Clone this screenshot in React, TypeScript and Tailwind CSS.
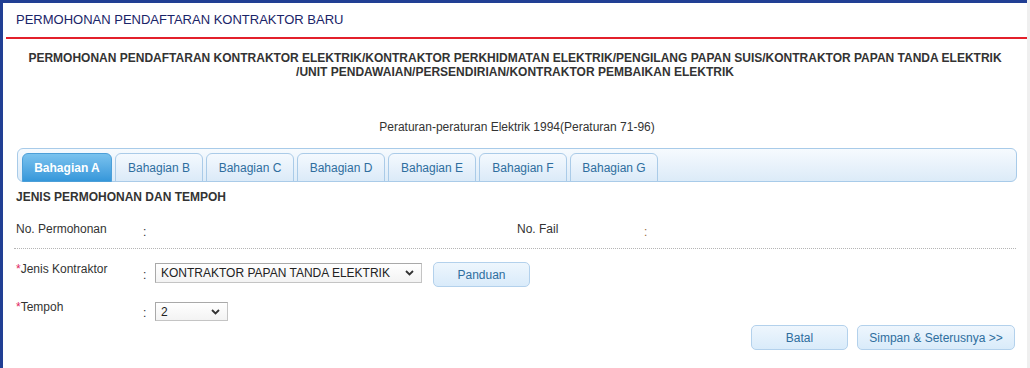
import React from "react";

const tabs = ["Bahagian A", "Bahagian B", "Bahagian C", "Bahagian D", "Bahagian E", "Bahagian F", "Bahagian G"];

function Chevron() {
  return (
    <svg width="9" height="6" viewBox="0 0 9 6" className="shrink-0">
      <path d="M1 1l3.5 3.5L8 1" fill="none" stroke="#333" strokeWidth="1.8" />
    </svg>
  );
}

function FakeSelect({ value, className }: { value: string; className: string }) {
  return (
    <div
      className={
        "flex items-center justify-between pl-[5px] pr-[7px] border border-[#c4c4c4] border-t-[#a9a9a9] border-l-[#a9a9a9] bg-gradient-to-b from-white to-[#f3f3f3] text-[12px] text-[#222] " +
        className
      }
    >
      <span>{value}</span>
      <Chevron />
    </div>
  );
}

function BlueButton({ label, className }: { label: string; className: string }) {
  return (
    <button
      className={
        "h-[25px] rounded-[5px] border border-[#b3d1ec] bg-gradient-to-b from-[#eef6fd] to-[#d9ebfa] text-[12px] text-[#2e6e9e] " +
        className
      }
    >
      {label}
    </button>
  );
}

export default function App() {
  return (
    <div className="w-[1030px] h-[368px] bg-[#efefef] flex font-['Liberation_Sans',Arial,sans-serif] overflow-hidden">
      <div className="w-[1027px] h-full bg-white border-l-[3px] border-t-[3px] border-[#213f94]">
        {/* TITLE */}
        <div className="h-[34px] pl-[13px] flex items-center text-[13px] text-[#1a2468]">
          PERMOHONAN PENDAFTARAN KONTRAKTOR BARU
        </div>
        <div className="ml-[3px] h-[2px] bg-[#e3202b]" />

        <div className="mt-[12px] text-center text-[12px] leading-[14px] font-bold text-[#333] whitespace-nowrap">
          PERMOHONAN PENDAFTARAN KONTRAKTOR ELEKTRIK/KONTRAKTOR PERKHIDMATAN ELEKTRIK/PENGILANG PAPAN SUIS/KONTRAKTOR PAPAN TANDA ELEKTRIK
          <br />
          /UNIT PENDAWAIAN/PERSENDIRIAN/KONTRAKTOR PEMBAIKAN ELEKTRIK
        </div>

        <div className="mt-[41px] text-center text-[12px] leading-[14px] text-[#333] pl-[4px]">
          Peraturan-peraturan Elektrik 1994(Peraturan 71-96)
        </div>

        {/* TABS */}
        <div className="ml-[14px] mt-[14px] w-[1000px] h-[34px] rounded-[6px] border border-[#a8cbe9] bg-gradient-to-b from-[#f6fafe] to-[#dcebf8] pl-[4px] pt-[3px] flex items-end gap-[3px]">
          {tabs.map((t, i) => (
            <div
              key={t}
              className={
                i === 0
                  ? "w-[90px] h-[29px] -mb-px rounded-t-[6px] border border-[#4c9fd8] bg-gradient-to-b from-[#79c2ee] to-[#3597da] text-white font-bold text-[12px] flex items-center justify-center"
                  : "w-[88px] h-[29px] -mb-px rounded-t-[6px] border border-[#aacbe8] bg-gradient-to-b from-[#f4f9fe] to-[#dbeaf8] text-[#2e6e9e] text-[12px] flex items-center justify-center"
              }
            >
              {t}
            </div>
          ))}
        </div>

        <div className="pl-[13px] pr-[11px]">
          <div className="mt-[8px] text-[12px] leading-[14px] font-bold text-[#333]">JENIS PERMOHONAN DAN TEMPOH</div>

          <div className="mt-[16px] grid grid-cols-[501px_1fr] text-[12px] text-[#333]">
            <div className="flex">
              <span className="w-[127px]">No. Permohonan</span>
              <span className="pt-[3px]">:</span>
            </div>
            <div className="flex">
              <span className="w-[127px]">No. Fail</span>
              <span className="pt-[3px] text-[#9a6a3a]">:</span>
            </div>
          </div>

          <div className="mt-[7px] -ml-[2px] border-t border-dotted border-[#b5b5b5]" />

          {/* FORM */}
          <div className="mt-[14px] flex text-[12px] text-[#333]">
            <span className="w-[127px] -mt-[3px]">
              <span className="text-[#e0245e]">*</span>Jenis Kontraktor
            </span>
            <span className="w-[12px] pt-[3px]">:</span>
            <FakeSelect value="KONTRAKTOR PAPAN TANDA ELEKTRIK" className="w-[267px] h-[20px]" />
            <BlueButton label="Panduan" className="ml-[11px] -mt-[1px] w-[97px]" />
          </div>

          <div className="mt-[15px] flex text-[12px] text-[#333]">
            <span className="w-[127px] -mt-[4px]">
              <span className="text-[#e0245e]">*</span>Tempoh
            </span>
            <span className="w-[12px] pt-[2px]">:</span>
            <FakeSelect value="2" className="w-[73px] h-[19px]" />
          </div>

          <div className="mt-[3px] flex justify-end gap-[9px] pr-[1px]">
            <BlueButton label="Batal" className="w-[97px]" />
            <BlueButton label="Simpan & Seterusnya >>" className="w-[158px]" />
          </div>
        </div>
      </div>
    </div>
  );
}
